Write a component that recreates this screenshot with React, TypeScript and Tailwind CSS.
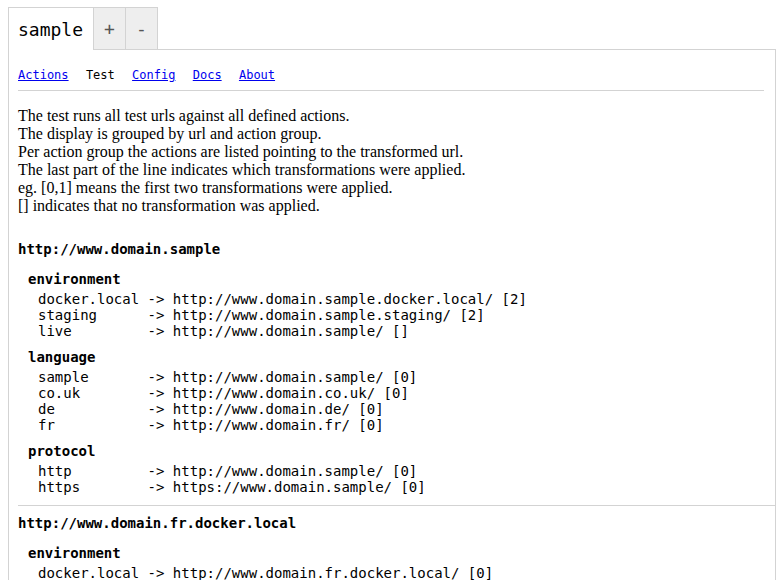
const mono = "font-['DejaVu_Sans_Mono',monospace]"

interface Group {
  name: string
  entries: [string, string][]
}

interface Section {
  url: string
  groups: Group[]
}

const sections: Section[] = [
  {
    url: 'http://www.domain.sample',
    groups: [
      {
        name: 'environment',
        entries: [
          ['docker.local', 'http://www.domain.sample.docker.local/ [2]'],
          ['staging', 'http://www.domain.sample.staging/ [2]'],
          ['live', 'http://www.domain.sample/ []'],
        ],
      },
      {
        name: 'language',
        entries: [
          ['sample', 'http://www.domain.sample/ [0]'],
          ['co.uk', 'http://www.domain.co.uk/ [0]'],
          ['de', 'http://www.domain.de/ [0]'],
          ['fr', 'http://www.domain.fr/ [0]'],
        ],
      },
      {
        name: 'protocol',
        entries: [
          ['http', 'http://www.domain.sample/ [0]'],
          ['https', 'https://www.domain.sample/ [0]'],
        ],
      },
    ],
  },
  {
    url: 'http://www.domain.fr.docker.local',
    groups: [
      {
        name: 'environment',
        entries: [
          ['docker.local', 'http://www.domain.fr.docker.local/ [0]'],
          ['staging', 'http://www.domain.fr.staging/ [0]'],
          ['live', 'http://www.domain.fr/ [0]'],
        ],
      },
      {
        name: 'language',
        entries: [
          ['sample', 'http://www.domain.sample.docker.local/ [0]'],
          ['co.uk', 'http://www.domain.co.uk.docker.local/ [0]'],
        ],
      },
    ],
  },
]

const navLinks = ['Actions', 'Test', 'Config', 'Docs', 'About']

function TestSection({ section, first }: { section: Section; first: boolean }) {
  return (
    <div className={first ? 'mt-[26px]' : '-mr-[9px] mt-[10px] border-t border-[#d3d3d3] pt-[9px]'}>
      <div className={`${mono} text-[14px] font-bold leading-[16px]`}>{section.url}</div>
      <div className="mt-[14px] flex flex-col gap-[10px] pl-[10px]">
        {section.groups.map(group => (
          <div key={group.name}>
            <div className={`${mono} text-[14px] font-bold leading-[16px]`}>{group.name}</div>
            <div className={`${mono} mt-1 whitespace-pre pl-[10px] text-[14px] leading-[16px]`}>
              {group.entries.map(([key, target]) => (
                <div key={key}>{`${key.padEnd(12)} -> ${target}`}</div>
              ))}
            </div>
          </div>
        ))}
      </div>
    </div>
  )
}

export default function App() {
  return (
    <div className="bg-white px-2 pt-[7px] text-black">
      <div className="flex w-[768px]">
        <div className={`${mono} flex h-[43px] items-center border-x border-t border-[#d3d3d3] bg-white pl-[9px] pr-[10px] text-[18px]`}>
          sample
        </div>
        <div className={`${mono} flex h-[43px] w-[32px] items-center justify-center border-y border-r border-[#d3d3d3] bg-[#eeeeee] text-[18px] text-[#555]`}>
          +
        </div>
        <div className={`${mono} flex h-[43px] w-[32px] items-center justify-center border-y border-r border-[#d3d3d3] bg-[#eeeeee] text-[18px] text-[#555]`}>
          -
        </div>
        <div className="flex-1 border-b border-[#d3d3d3]" />
      </div>
      <div className="w-[768px] border-x border-[#d3d3d3] px-[9px] pb-6 pt-[17px]">
        <nav className={`${mono} flex gap-[17.3px] text-[12px] leading-[16px]`}>
          {navLinks.map(link =>
            link === 'Test' ? (
              <span key={link}>{link}</span>
            ) : (
              <a key={link} href="#" className="text-[#0000ee] underline">
                {link}
              </a>
            )
          )}
        </nav>
        <div className="mr-[2px] mt-[7px] border-t border-[#d3d3d3]" />
        <p className="mt-4 font-['Liberation_Serif',serif] text-[16px] leading-[18px]">
          The test runs all test urls against all defined actions.
          <br />
          The display is grouped by url and action group.
          <br />
          Per action group the actions are listed pointing to the transformed url.
          <br />
          The last part of the line indicates which transformations were applied.
          <br />
          eg. [0,1] means the first two transformations were applied.
          <br />
          [] indicates that no transformation was applied.
        </p>
        {sections.map((section, i) => (
          <TestSection key={section.url} section={section} first={i === 0} />
        ))}
      </div>
    </div>
  )
}
